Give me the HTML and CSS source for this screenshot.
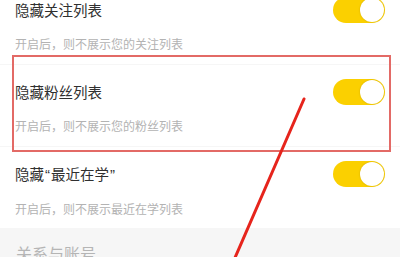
FILE: index.html
```html
<!DOCTYPE html>
<html lang="zh">
<head>
<meta charset="utf-8">
<link rel="stylesheet" href="styles.css">
</head>
<body>
<div class="page">
  <div class="list">
    <div class="row">
      <div class="text">
        <div class="title">隐藏关注列表</div>
        <div class="sub">开启后，则不展示您的关注列表</div>
      </div>
      <div class="toggle"><span class="knob"></span></div>
    </div>
    <div class="row">
      <div class="text">
        <div class="title">隐藏粉丝列表</div>
        <div class="sub">开启后，则不展示您的粉丝列表</div>
      </div>
      <div class="toggle"><span class="knob"></span></div>
    </div>
    <div class="row">
      <div class="text">
        <div class="title">隐藏<span class="q">“</span>最近在学<span class="q">”</span></div>
        <div class="sub">开启后，则不展示最近在学列表</div>
      </div>
      <div class="toggle"><span class="knob"></span></div>
    </div>
    <div class="section">关系与账号</div>
  </div>
  <div class="highlight"></div>
  <svg class="arrow" width="400" height="257" viewBox="0 0 400 257">
    <line x1="304" y1="99" x2="234" y2="260" stroke="#e6241c" stroke-width="3" stroke-linecap="round"/>
  </svg>
</div>
</body>
</html>
```
FILE: styles.css
```css
html, body {
  margin: 0;
  padding: 0;
  background: #fff;
}
body {
  width: 400px;
  height: 257px;
  overflow: hidden;
  font-family: "Noto Sans CJK SC", "Noto Sans", sans-serif;
}
.page {
  position: relative;
  width: 400px;
  height: 257px;
  overflow: hidden;
}
.list {
  margin-top: -17px;
}
.row {
  height: 82px;
  box-sizing: border-box;
  display: flex;
  justify-content: space-between;
  align-items: flex-start;
  padding: 0 15px 0 15px;
  border-bottom: 1px solid #f6f6f6;
}
.row:last-of-type {
  border-bottom: none;
}
.text {
  display: flex;
  flex-direction: column;
}
.title {
  font-size: 14.5px;
  line-height: 20px;
  color: #303030;
  margin-top: 17px;
}
.q {
  font-family: "Liberation Sans", sans-serif;
  font-size: 15px;
  margin: 0 1px;
}
.sub {
  font-size: 12px;
  line-height: 16px;
  color: #b3b3b3;
  margin-top: 16px;
}
.toggle {
  margin-top: 14px;
  width: 52px;
  height: 26px;
  border-radius: 13px;
  background: #fbd000;
  position: relative;
}
.knob {
  position: absolute;
  right: 1px;
  top: 1px;
  width: 24px;
  height: 24px;
  border-radius: 50%;
  background: #fff;
  box-shadow: 0 0 2px rgba(0,0,0,0.18);
}
.section {
  height: 41px;
  background: #f6f6f6;
  color: #b5b5b5;
  font-size: 16px;
  line-height: 20px;
  padding: 14px 0 0 16px;
  box-sizing: border-box;
}
.highlight {
  position: absolute;
  left: 12px;
  top: 55px;
  width: 379px;
  height: 97px;
  box-sizing: border-box;
  border: 2px solid #e36a66;
}
.arrow {
  position: absolute;
  left: 0;
  top: 0;
}
```
